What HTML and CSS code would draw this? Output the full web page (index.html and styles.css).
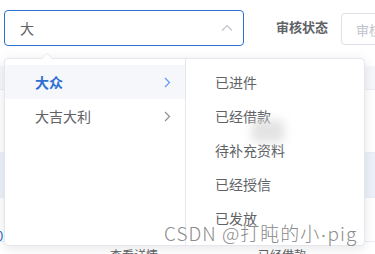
FILE: index.html
```html
<!DOCTYPE html>
<html lang="zh">
<head>
<meta charset="utf-8">
<link rel="stylesheet" href="styles.css">
</head>
<body>
<div class="page">
  <div class="filter">
    <div class="cascader">
      <span class="value">大</span>
      <svg class="caret" width="12" height="8" viewBox="0 0 12 8"><path d="M1 6.5 L6 1.5 L11 6.5" fill="none" stroke="#c0c4cc" stroke-width="1.2"/></svg>
    </div>
    <label class="label">审核状态</label>
    <div class="select"><span class="placeholder">审核状态</span></div>
  </div>
  <div class="table">
    <div class="row head"></div>
    <div class="row tall"></div>
    <div class="row hover"></div>
    <div class="row"><span class="link">0</span></div>
    <div class="row last"><span class="cell c1">查看详情</span><span class="cell c2">已经借款</span></div>
  </div>

  <div class="dropdown">
    <span class="arrow"></span>
    <ul class="menu first">
      <li class="item active"><span>大众</span>
        <svg width="7" height="11" viewBox="0 0 7 11"><path d="M1 1 L5.5 5.5 L1 10" fill="none" stroke="#5b9af0" stroke-width="1.2"/></svg></li>
      <li class="item"><span>大吉大利</span>
        <svg width="7" height="11" viewBox="0 0 7 11"><path d="M1 1 L5.5 5.5 L1 10" fill="none" stroke="#8a8d93" stroke-width="1.2"/></svg></li>
    </ul>
    <ul class="menu second">
      <li class="item"><span>已进件</span></li>
      <li class="item"><span>已经借款</span></li>
      <li class="item"><span>待补充资料</span></li>
      <li class="item"><span>已经授信</span></li>
      <li class="item"><span>已发放</span></li>
    </ul>
  </div>
  <div class="smudge"></div>
  <div class="watermark">CSDN @打盹的小<span class="dot">·</span>pig</div>
</div>
</body>
</html>
```
FILE: styles.css
```css
* { box-sizing: border-box; }
html, body { margin: 0; padding: 0; background: #fff; }
body {
  font-family: "Noto Sans CJK SC", "Noto Sans", sans-serif;
  color: #606266;
  width: 375px;
  height: 254px;
  overflow: hidden;
}
.page { position: relative; width: 375px; height: 254px; overflow: hidden; }

.filter {
  display: flex;
  align-items: flex-start;
  padding-top: 10px;
  height: 46px;
}
.cascader {
  flex-shrink: 0;
  margin-left: 4px;
  width: 240px;
  height: 36px;
  border: 1px solid #2e6fd4;
  border-radius: 4px;
  display: flex;
  align-items: center;
  justify-content: space-between;
  padding: 0 10px 0 15px;
}
.value { font-size: 14px; color: #606266; line-height: 1; }
.label {
  flex-shrink: 0;
  margin-left: 32px;
  margin-top: 8px;
  font-size: 13px;
  font-weight: bold;
  color: #606266;
  line-height: 18px;
  white-space: nowrap;
}
.select {
  margin-left: 13px;
  margin-top: 3px;
  width: 140px;
  height: 32px;
  border: 1px solid #dcdfe6;
  border-radius: 4px;
  padding-left: 14px;
  display: flex;
  align-items: center;
  white-space: nowrap;
  flex-shrink: 0;
}
.placeholder { font-size: 13px; color: #c0c4cc; }

.table { margin-top: 20px; }
.row { height: 44px; border-bottom: 1px solid #ebeef5; position: relative; }
.row.head { height: 24px; background: #f5f7fa; }
.row.tall { height: 63px; }
.row.hover { height: 45px; background: #edf2fa; }
.row .link { position: absolute; left: -4px; top: 28px; font-size: 13px; color: #2e6fd4; }
.row.last { height: 30px; }
.cell { position: absolute; top: 4px; font-size: 12px; color: #606266; }
.c1 { left: 110px; }
.c2 { left: 258px; }

.dropdown {
  position: absolute;
  left: 4px;
  top: 58px;
  width: 361px;
  height: 188px;
  background: #fff;
  border: 1px solid #e4e7ed;
  border-radius: 4px;
  box-shadow: 0 2px 12px rgba(0, 0, 0, 0.1);
  display: flex;
}
.arrow {
  position: absolute;
  left: 36px;
  top: -6px;
  width: 0; height: 0;
  border-left: 6px solid transparent;
  border-right: 6px solid transparent;
  border-bottom: 6px solid #e4e7ed;
}
.arrow::after {
  content: "";
  position: absolute;
  left: -5px;
  top: 1px;
  border-left: 5px solid transparent;
  border-right: 5px solid transparent;
  border-bottom: 5px solid #fff;
}
.menu {
  list-style: none;
  margin: 0;
  padding: 6px 0;
  height: 100%;
}
.menu.first { width: 181px; flex-shrink: 0; border-right: 1px solid #e4e7ed; }
.menu.second { flex: 1; }
.item {
  height: 34px;
  display: flex;
  align-items: center;
  justify-content: space-between;
  padding: 0 14px 0 30px;
  font-size: 14px;
  color: #606266;
}
.menu.second .item { padding-left: 29px; }
.item.active { background: #f5f7fa; color: #2e6fd4; font-weight: bold; }

.smudge {
  position: absolute;
  left: 252px;
  top: 120px;
  width: 32px;
  height: 22px;
  background: #dcdcdc;
  filter: blur(5px);
  opacity: 0.8;
}
.watermark {
  position: absolute;
  left: 164px;
  top: 221px;
  font-size: 19px;
  line-height: 24px;
  letter-spacing: 1px;
  font-weight: 300;
  color: #8c8c8c;
  white-space: nowrap;
  text-shadow: 0 0 2px #fff;
}
.watermark .dot { font-family: "Liberation Sans", sans-serif; }
```
